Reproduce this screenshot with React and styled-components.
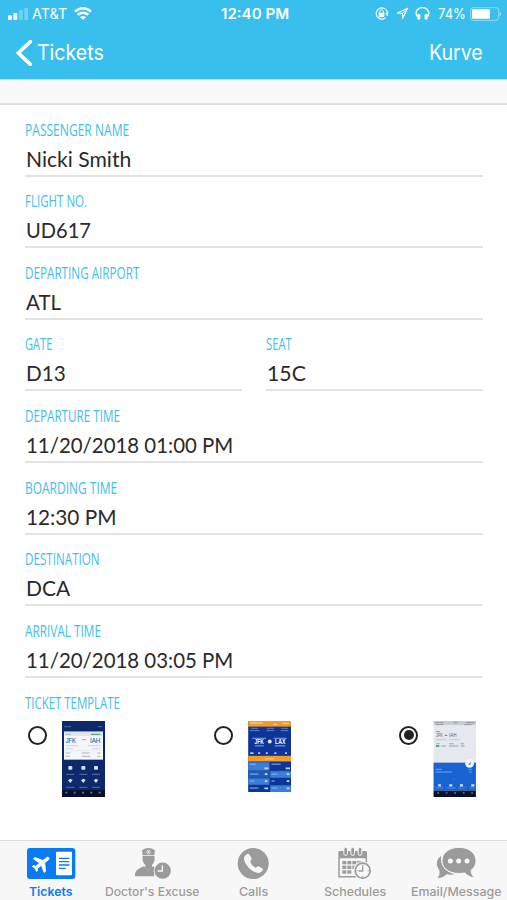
import React, { useLayoutEffect, useRef, useState } from 'react';
import styled, { createGlobalStyle } from 'styled-components';

const GlobalStyle = createGlobalStyle`
  * {
    box-sizing: border-box;
  }

  body {
    margin: 0;
    background: #fff;
    font-family: Inter, 'Liberation Sans', sans-serif;
  }
`;

const Screen = styled.div`
  display: flex;
  flex-direction: column;
  width: 507px;
  height: 900px;
  overflow: hidden;
  background: #fff;
`;

const Header = styled.header`
  flex: none;
  height: 80px;
  background: #39bfed;
  border-bottom: 1px solid #a4e8fb;
  color: #fff;
`;

const StatusBar = styled.div`
  display: grid;
  grid-template-columns: 1fr auto 1fr;
  align-items: center;
  height: 27px;
  padding: 0 6px 0 8px;
  font-size: 14px;
  line-height: 20px;
`;

const StatusGroup = styled.div`
  display: flex;
  align-items: center;
  justify-content: ${(props) => (props.$end ? 'flex-end' : 'flex-start')};
`;

const Carrier = styled.span`
  margin: 0 7px 0 4px;
`;

const Clock = styled.span`
  padding-left: 1px;
  font-weight: 600;
`;

const Battery = styled.span`
  margin: 0 4px 0 7px;
`;

const NavBar = styled.nav`
  display: flex;
  align-items: center;
  justify-content: space-between;
  height: 51px;
  padding: 0 24px 0 16px;
  font-size: 21px;
  line-height: 28px;
`;

const BackButton = styled.div`
  display: flex;
  align-items: center;
  gap: 5px;
`;

const Icon = styled.svg`
  display: block;
  flex: none;
`;

const Spacer = styled.div`
  flex: none;
  height: 25px;
  background: #f8f8f8;
  border-bottom: 2px solid #e0e0e0;
`;

const Form = styled.main`
  flex: 1;
  padding: 0 24px 0 25px;
`;

const FieldRow = styled.div`
  display: grid;
  grid-template-columns: repeat(${(props) => props.$columns}, 1fr);
  column-gap: 24px;
`;

const Field = styled.div`
  height: 71.6px;
  padding-top: 14.6px;
  border-bottom: 2px solid #e1e2e3;
`;

const Label = styled.div`
  height: 20px;
  font-family: 'Open Sans', 'Noto Sans', sans-serif;
  font-size: 16px;
  line-height: 20px;
  color: #3fbeea;
`;

const Value = styled.div`
  height: 24px;
  margin-top: 7px;
  padding-left: 1px;
  font-family: Lato, 'Open Sans', sans-serif;
  font-size: 21px;
  line-height: 24px;
  color: #2a2a2a;
`;

const TemplateSection = styled.section`
  padding-top: 15px;
`;

const TemplateList = styled.div`
  display: grid;
  grid-template-columns: repeat(3, 185.7px);
  margin-top: 8px;
`;

const TemplateOption = styled.div`
  display: flex;
  align-items: flex-start;
  gap: 15px;
  padding-left: 3px;
`;

const Radio = styled.span`
  display: flex;
  align-items: center;
  justify-content: center;
  width: 19px;
  height: 19px;
  margin-top: 5px;
  border: 2.5px solid #222;
  border-radius: 50%;

  &::after {
    content: '';
    width: 10px;
    height: 10px;
    border-radius: 50%;
    background: ${(props) => (props.$checked ? '#222' : 'transparent')};
  }
`;

const TabBar = styled.footer`
  display: grid;
  grid-template-columns: repeat(5, 1fr);
  flex: none;
  height: 60px;
  background: #f7f7f7;
  border-top: 1px solid #dadada;
`;

const Tab = styled.div`
  display: flex;
  flex-direction: column;
  align-items: center;
  padding-top: 6px;
  font-size: 12px;
  font-weight: ${(props) => (props.$active ? 600 : 500)};
  line-height: 16px;
  color: ${(props) => (props.$active ? '#087bf5' : '#9b9b9b')};
`;

const TabLabel = styled.span`
  margin-top: 4px;
`;

const TextFrame = styled.span`
  display: block;
  white-space: nowrap;
`;

const TextRun = styled.span`
  display: inline-block;
  transform-origin: 0 50%;
`;

// Condenses or widens a run of text so that it takes exactly the given width
const FitText = ({ width, children }) => {
  const ref = useRef(null);
  const [scale, setScale] = useState(1);

  useLayoutEffect(() => {
    setScale(width / ref.current.offsetWidth);
  }, [width, children]);

  return (
    <TextFrame style={{ width }}>
      <TextRun ref={ref} style={{ transform: `scaleX(${scale})` }}>{children}</TextRun>
    </TextFrame>
  );
};

const SignalIcon = () => (
  <Icon width="20" height="12" viewBox="24 22 60 36" fill="#fff">
    <rect x="24" y="44" width="11" height="14" rx="3" />
    <rect x="40" y="37" width="12" height="21" rx="3" />
    <rect x="57" y="29" width="11" height="29" rx="3" opacity=".3" />
    <rect x="73" y="22" width="11" height="36" rx="3" opacity=".3" />
  </Icon>
);

const WifiIcon = () => (
  <Icon width="18" height="13" viewBox="222 20 54 38" fill="none" stroke="#fff" strokeWidth="7.5">
    <path d="M225 33 Q249 13 273 33" />
    <path d="M233 43 Q249 30 265 43" />
    <path d="M240 50 Q249 43 258 50 L249 58Z" fill="#fff" stroke="none" />
  </Icon>
);

const StatusIcons = () => (
  <Icon width="57" height="15" viewBox="358 18 171 45" fill="none" stroke="#fff">
    <path d="M393 28a17 17 0 1 0 0 25" strokeWidth="3.5" />
    <path d="M397 47a17 17 0 0 0-3-18" strokeWidth="3.5" />
    <path d="M391 38h11l-6 8Z" fill="#fff" stroke="none" />
    <rect x="372" y="38" width="17" height="13" rx="2" fill="#fff" stroke="none" />
    <path d="M375 39v-4a5.5 5.5 0 0 1 11 0v4" strokeWidth="3" />
    <path d="M459 25l-15 30-1-15-15-1Z" strokeWidth="3.5" strokeLinejoin="round" />
    <path d="M443 40L459 25" strokeWidth="3" />
    <path d="M488 50c-9-15 1-27 15-27s25 12 16 27" strokeWidth="4" />
    <rect x="488" y="42" width="9" height="17" rx="4" fill="#fff" stroke="none" />
    <rect x="510" y="42" width="9" height="17" rx="4" fill="#fff" stroke="none" />
  </Icon>
);

const BatteryIcon = () => (
  <Icon width="31" height="14" viewBox="646 19 93 42">
    <rect x="648" y="21" width="84" height="38" rx="8" fill="none" stroke="#fff" strokeWidth="2.5" opacity=".55" />
    <rect x="652" y="26" width="54" height="28" rx="3" fill="#fff" />
    <path d="M735 34q4 2 4 6t-4 6Z" fill="#fff" opacity=".6" />
  </Icon>
);

const BackIcon = () => (
  <Icon width="16" height="26" viewBox="48 118 48 78">
    <path d="M91 123L55 157l36 34" fill="none" stroke="#fff" strokeWidth="11" strokeLinecap="round" />
  </Icon>
);

const TicketIcon = () => (
  <Icon width="50" height="33" viewBox="77 50 150 99">
    <rect x="80" y="53" width="145" height="93" rx="9" fill="#087bf5" />
    <path
      transform="translate(124 99) rotate(52) scale(2.75) translate(-11.5 -12)"
      fill="#fff"
      stroke="#fff"
      strokeWidth=".9"
      d="M21 16v-2l-8-5V3.5c0-.83-.67-1.5-1.5-1.5S10 2.67 10 3.5V9l-8 5v2l8-2.5V19l-2 1.5V22l3.5-1 3.5 1v-1.5L13 19v-5.5l8 2.5z"
    />
    <rect x="167" y="64" width="48" height="71" rx="3" fill="#fff" />
    <path d="M176 84h31M176 94h31M176 104h31M176 114h20" stroke="#087bf5" strokeWidth="4" />
  </Icon>
);

const DoctorIcon = () => (
  <Icon width="50" height="33" viewBox="381 50 150 99" fill="#9b9b9b">
    <path d="M426 60Q445 46 465 60L463 75H428Z" />
    <circle cx="445.5" cy="65" r="5.5" fill="none" stroke="#f7f7f7" strokeWidth="2" />
    <path d="M442.5 65h6M445.5 62v6" stroke="#f7f7f7" strokeWidth="2" />
    <path d="M428 77h35c3 13-2 22-7 27v8l-10 6-10-6v-8c-6-5-10-14-8-27Z" />
    <path d="M432 108l14 10 13-10 9 5-6 25H405c-1-16 7-22 27-30Z" />
    <circle cx="488" cy="121" r="27" fill="#f7f7f7" />
    <circle cx="488" cy="121" r="24.5" />
    <path d="M487 105v17h-14" fill="none" stroke="#f7f7f7" strokeWidth="4" />
  </Icon>
);

const CallsIcon = () => (
  <Icon width="50" height="33" viewBox="55.5 50 150 99">
    <circle cx="131" cy="99.5" r="46.5" fill="#9b9b9b" />
    <path
      d="M108 75c4-5 9-6 12-2l6 10c2 4-3 7-4 10 2 9 9 16 16 19 4 0 5-5 9-4l11 6c5 3 1 9-4 12-12 7-31-6-40-18-9-11-15-24-6-33Z"
      fill="#f7f7f7"
    />
  </Icon>
);

const calendarCells = [[397, 92], [412, 92], [427, 92], [442, 92], [397, 106], [412, 106], [427, 106], [397, 120], [412, 120]];

const SchedulesIcon = () => (
  <Icon width="50" height="33" viewBox="360 50 150 99" fill="#9b9b9b">
    <path d="M389 62h78q4 0 4 4v18h-86V66q0-4 4-4Z" />
    {[407, 428, 450].map((x) => (
      <rect key={x} x={x - 5.5} y="51" width="11" height="24" rx="5.5" stroke="#f7f7f7" strokeWidth="3" />
    ))}
    <path d="M387 82v57h54M469 82v15" fill="none" stroke="#9b9b9b" strokeWidth="4.5" />
    {calendarCells.map(([x, y]) => (
      <rect key={`${x}-${y}`} x={x} y={y} width="12" height="10" />
    ))}
    <circle cx="458" cy="121" r="28" fill="#f7f7f7" />
    <circle cx="458" cy="121" r="22.5" fill="none" stroke="#9b9b9b" strokeWidth="5" />
    <path d="M458 108v14h-12M458 103v3M458 136v3M440 121h3M473 121h3" fill="none" stroke="#9b9b9b" strokeWidth="4" />
  </Icon>
);

const MessageIcon = () => (
  <Icon width="50" height="33" viewBox="664 50 150 99" fill="#9b9b9b">
    <path d="M694 77c-14 9-17 28-5 42 2 9 0 18-5 25 12-1 20-5 27-12 9 2 17 1 25-1-27-4-45-25-42-54Z" />
    <path
      d="M748 51c29 0 51 17 51 40 0 12-5 22-15 29 1 10 5 18 11 23-13-2-22-7-29-15-43 7-69-12-69-37 0-23 22-40 51-40Z"
      stroke="#f7f7f7"
      strokeWidth="3"
    />
    <g fill="#f7f7f7">
      <circle cx="722" cy="92" r="7.5" />
      <circle cx="747" cy="92" r="7.5" />
      <circle cx="772" cy="92" r="7.5" />
    </g>
  </Icon>
);

const NavyTicket = () => (
  <Icon width="43" height="76" viewBox="127 93 129 228" fontFamily="Liberation Sans, sans-serif">
    <rect x="127" y="93" width="129" height="228" fill="#0d286b" />
    <path d="M134 110h20M234 110h14" stroke="#4c6cac" strokeWidth="3" />
    <rect x="133" y="125" width="117" height="84" fill="#f4f6fa" />
    <rect x="133" y="125" width="117" height="13" fill="#dfe6ee" />
    <path d="M138 133h16" stroke="#8f9bad" strokeWidth="2" />
    <path d="M214 133h28" stroke="#66aa83" strokeWidth="4" />
    <text x="138" y="158" fontSize="20" fill="#2474c0" stroke="#2474c0" strokeWidth=".5" textLength="31" lengthAdjust="spacingAndGlyphs">JFK</text>
    <text x="211" y="158" fontSize="20" fill="#2474c0" stroke="#2474c0" strokeWidth=".5" textLength="31" lengthAdjust="spacingAndGlyphs">IAH</text>
    <path d="M187 149h12" stroke="#c79b95" strokeWidth="3" />
    <path d="M138 167h38M205 167h37M138 176h22M217 176h25" stroke="#cdd4df" strokeWidth="3" />
    <path d="M133 182h117" stroke="#d4dae3" strokeWidth="1" />
    <path d="M138 189h14M186 189h24M233 189h9M138 199h13M186 199h26M233 199h9" stroke="#a9b2c1" strokeWidth="3" />
    {[152, 191, 229].map((x) => (
      <g key={x} fill="#d6e4f8">
        <rect x={x - 6} y="228" width="12" height="11" rx="3" />
        <path d={`M${x - 7} 271l7-5 7 4-7 9Z`} />
        <path d={`M${x - 12} 253h24M${x - 12} 292h24`} stroke="#5872aa" strokeWidth="3" />
      </g>
    ))}
    <rect x="127" y="300" width="129" height="21" fill="#07112d" />
    <path d="M137 308h6M187 308h6M212 308h6M237 308h6" stroke="#68738c" strokeWidth="5" />
    <path d="M162 308h6" stroke="#1878d4" strokeWidth="6" />
  </Icon>
);

const OrangeTicket = () => (
  <Icon width="43.5" height="71" viewBox="128 93 130 214" fontFamily="Liberation Sans, sans-serif">
    <rect x="128" y="93" width="130" height="214" fill="#0d3599" />
    <rect x="128" y="93" width="130" height="17" fill="#f39a27" />
    <path d="M134 99h38M205 103h9M232 100h18" stroke="#ffe0ac" strokeWidth="3" />
    <path d="M136 115h22M184 115h22M228 115h20M132 122h30M183 122h24M226 122h22" stroke="#607fc6" strokeWidth="3" />
    <path d="M140 145h42M205 145h39" stroke="#8ea6da" strokeWidth="3" />
    <text x="147" y="163" fontSize="20" fontWeight="700" fill="#fff" textLength="28" lengthAdjust="spacingAndGlyphs">JFK</text>
    <text x="209" y="163" fontSize="20" fontWeight="700" fill="#fff" textLength="31" lengthAdjust="spacingAndGlyphs">LAX</text>
    <circle cx="193" cy="155" r="6" fill="#d9e4ff" />
    <path d="M148 168h27M208 168h32" stroke="#8ea6da" strokeWidth="3" />
    <path d="M134 190h10M158 190h6M181 190h6M207 190h6M239 190h6" stroke="#bbcaf0" strokeWidth="5" />
    <rect x="128" y="198" width="130" height="17" fill="#f39a27" />
    <path d="M178 207h28" stroke="#ffd18b" strokeWidth="3" />
    <path d="M128 217h65v48h-65ZM194 243h64v22h-64ZM128 265h65v21h-65ZM194 286h64v21h-64Z" fill="#397fd8" />
    <path d="M128 243h65v22h-65Z" fill="#1f5cb9" />
    <path d="M128 243h130M128 265h130M128 286h130M193.5 216v91" stroke="#153986" strokeWidth="1.5" />
    <path
      d="M132 223h19M198 223h28M133 253h26M198 253h18M133 274h14M198 274h10M133 295h26M198 295h18"
      stroke="#91b8ed"
      strokeWidth="3"
    />
    <path d="M177 236h12M241 236h13M178 253h8M244 253h8M178 274h8M244 274h8M177 296h11M244 296h8" stroke="#c3d9fa" strokeWidth="5" />
  </Icon>
);

const WhiteTicket = () => (
  <Icon width="43.5" height="76" viewBox="131 93 127 228" fontFamily="Liberation Sans, sans-serif">
    <rect x="131" y="93" width="127" height="228" fill="#e5e8ee" />
    <rect x="131" y="93" width="127" height="12" fill="#c7cbd2" />
    <path d="M136 98h24M190 98h14M228 98h26M138 104h22M223 104h22" stroke="#8b9098" strokeWidth="2.5" />
    <path d="M138 125h12" stroke="#8b939f" strokeWidth="3" />
    <text x="138" y="141" fontSize="16" fill="#5c6470" textLength="21" lengthAdjust="spacingAndGlyphs">JFK</text>
    <text x="177" y="141" fontSize="16" fill="#5c6470" textLength="23" lengthAdjust="spacingAndGlyphs">IAH</text>
    <path d="M165 136h7" stroke="#69717e" strokeWidth="3" />
    <path d="M138 149h32M178 149h31" stroke="#c5cad2" strokeWidth="3" />
    <path d="M138 161h12M178 161h13M212 161h10M154 168h14M177 168h28M212 168h12" stroke="#b1b7c0" strokeWidth="4" />
    <path d="M138 168h10" stroke="#4bae8c" strokeWidth="6" />
    <rect x="131" y="218" width="127" height="84" fill="#1763d2" />
    <circle cx="239" cy="220" r="13" fill="#f7f9fc" />
    <path d="M234 223l10-8-3 11Z" fill="#6293ce" />
    <path d="M137 238h19M137 246h49M235 238h10M237 246h8" stroke="#77a5eb" strokeWidth="3" />
    <path d="M188 267h7" stroke="#5285d6" strokeWidth="2" />
    <path d="M145 286h8M178 286h9M210 286h9M244 286h9" stroke="#d5e5ff" strokeWidth="7" />
    <path d="M137 294h24M170 294h27M204 294h22M238 294h16" stroke="#6b99df" strokeWidth="2" />
    <rect x="131" y="302" width="127" height="19" fill="#08122f" />
    <path d="M142 309h5M193 309h5M219 309h5M244 309h5" stroke="#717d97" strokeWidth="5" />
    <path d="M167 309h6" stroke="#166bd6" strokeWidth="5" />
  </Icon>
);

const rows = [
  [{ label: 'PASSENGER NAME', labelWidth: 104, value: 'Nicki Smith', width: 105.5 }],
  [{ label: 'FLIGHT NO.', labelWidth: 62, value: 'UD617', width: 65 }],
  [{ label: 'DEPARTING AIRPORT', labelWidth: 114, value: 'ATL', width: 35 }],
  [
    { label: 'GATE', labelWidth: 27, value: 'D13', width: 39.5 },
    { label: 'SEAT', labelWidth: 26, value: '15C', width: 38.5 },
  ],
  [{ label: 'DEPARTURE TIME', labelWidth: 95, value: '11/20/2018 01:00 PM', width: 207 }],
  [{ label: 'BOARDING TIME', labelWidth: 92, value: '12:30 PM', width: 90 }],
  [{ label: 'DESTINATION', labelWidth: 75, value: 'DCA', width: 44 }],
  [{ label: 'ARRIVAL TIME', labelWidth: 76, value: '11/20/2018 03:05 PM', width: 207 }],
];

const templates = [
  { id: 'navy', Preview: NavyTicket },
  { id: 'orange', Preview: OrangeTicket },
  { id: 'white', Preview: WhiteTicket, checked: true },
];

const tabs = [
  { label: 'Tickets', width: 43, TabIcon: TicketIcon, active: true },
  { label: "Doctor's Excuse", width: 94, TabIcon: DoctorIcon },
  { label: 'Calls', width: 29, TabIcon: CallsIcon },
  { label: 'Schedules', width: 62, TabIcon: SchedulesIcon },
  { label: 'Email/Message', width: 90, TabIcon: MessageIcon },
];

const App = () => {
  return (
    <Screen>
      <GlobalStyle />
      <Header>
        <StatusBar>
          <StatusGroup>
            <SignalIcon />
            <Carrier><FitText width={35}>AT&amp;T</FitText></Carrier>
            <WifiIcon />
          </StatusGroup>
          <Clock><FitText width={68}>12:40 PM</FitText></Clock>
          <StatusGroup $end>
            <StatusIcons />
            <Battery><FitText width={28}>74%</FitText></Battery>
            <BatteryIcon />
          </StatusGroup>
        </StatusBar>
        <NavBar>
          <BackButton>
            <BackIcon />
            <FitText width={67}>Tickets</FitText>
          </BackButton>
          <FitText width={54}>Kurve</FitText>
        </NavBar>
      </Header>
      <Spacer />

      <Form>
        {rows.map((fields) => (
          <FieldRow key={fields[0].label} $columns={fields.length}>
            {fields.map((field) => (
              <Field key={field.label}>
                <Label><FitText width={field.labelWidth}>{field.label}</FitText></Label>
                <Value><FitText width={field.width}>{field.value}</FitText></Value>
              </Field>
            ))}
          </FieldRow>
        ))}

        <TemplateSection>
          <Label><FitText width={95}>TICKET TEMPLATE</FitText></Label>
          <TemplateList>
            {templates.map(({ id, Preview, checked }) => (
              <TemplateOption key={id}>
                <Radio $checked={checked} />
                <Preview />
              </TemplateOption>
            ))}
          </TemplateList>
        </TemplateSection>
      </Form>

      <TabBar>
        {tabs.map(({ label, width, TabIcon, active }) => (
          <Tab key={label} $active={active}>
            <TabIcon />
            <TabLabel><FitText width={width}>{label}</FitText></TabLabel>
          </Tab>
        ))}
      </TabBar>
    </Screen>
  );
};

export default App;
